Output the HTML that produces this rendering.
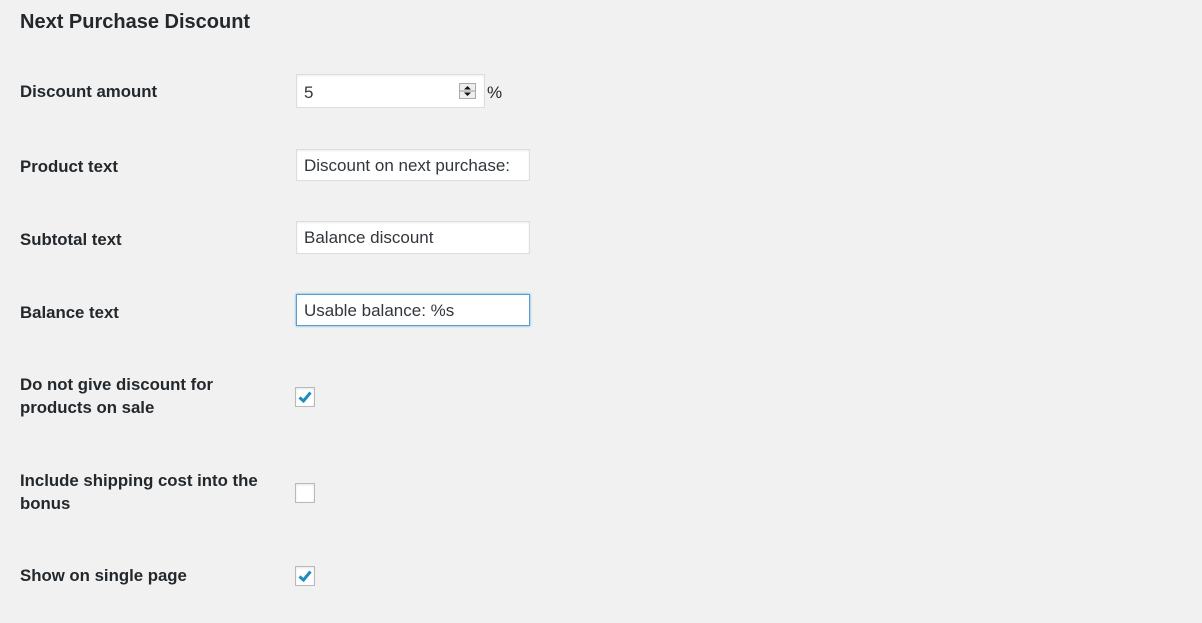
<!DOCTYPE html>
<html><head><style>
body{margin:0;width:1202px;height:623px;background:#f1f1f1;font-family:"Liberation Sans",sans-serif;color:#23282d;position:relative;overflow:hidden}
.a{position:absolute}
h2{position:absolute;left:20px;top:11px;margin:0;font-size:20px;font-weight:600;color:#23282d}
.l{position:absolute;left:20px;font-size:16.8px;font-weight:bold;color:#23282d;line-height:23px;width:240px}
.i{position:absolute;left:296px;width:232px;height:30px;background:#fff;border:1px solid #ddd;box-shadow:inset 0 1px 2px rgba(0,0,0,.07);font-size:17px;line-height:32px;padding-left:7px;box-sizing:border-box;color:#32373c}
.c{position:absolute;left:295px;width:18px;height:18px;background:#fff;border:1px solid #b4b9be;box-shadow:inset 0 1px 2px rgba(0,0,0,.1)}
</style></head><body>
<h2>Next Purchase Discount</h2>
<div class="l" style="top:80px">Discount amount</div>
<div class="i" style="top:74px;width:189px;height:34px;line-height:35px">5
<svg class="a" style="left:162px;top:8px" width="17" height="16" viewBox="0 0 17 16"><rect x="0.5" y="0.5" width="16" height="15" fill="#eee" stroke="#aaa"/><line x1="1" y1="8" x2="16" y2="8" stroke="#999"/><path d="M5 6.5L8.5 3 12 6.5Z M5 9.5L8.5 13 12 9.5Z" fill="#111"/></svg></div>
<div class="a" style="left:487px;top:83px;font-size:17px">%</div>
<div class="l" style="top:155px">Product text</div>
<div class="i" style="top:149px;width:234px;height:32px">Discount on next purchase:</div>
<div class="l" style="top:228px">Subtotal text</div>
<div class="i" style="top:221px;width:234px;height:33px">Balance discount</div>
<div class="l" style="top:301px">Balance text</div>
<div class="i" style="top:294px;width:234px;height:32px;border-color:#5b9dd9;box-shadow:0 0 2px rgba(30,140,190,.8)">Usable balance: %s</div>
<div class="l" style="top:373px">Do not give discount for products on sale</div>
<div class="c" style="top:387px"><svg width="18" height="18"><path d="M3.5 9.5L7.5 13 14.5 4.5" stroke="#1e8cbe" stroke-width="3" fill="none"/></svg></div>
<div class="l" style="top:469px">Include shipping cost into the bonus</div>
<div class="c" style="top:483px"></div>
<div class="l" style="top:564px">Show on single page</div>
<div class="c" style="top:566px"><svg width="18" height="18"><path d="M3.5 9.5L7.5 13 14.5 4.5" stroke="#1e8cbe" stroke-width="3" fill="none"/></svg></div>
</body></html>
